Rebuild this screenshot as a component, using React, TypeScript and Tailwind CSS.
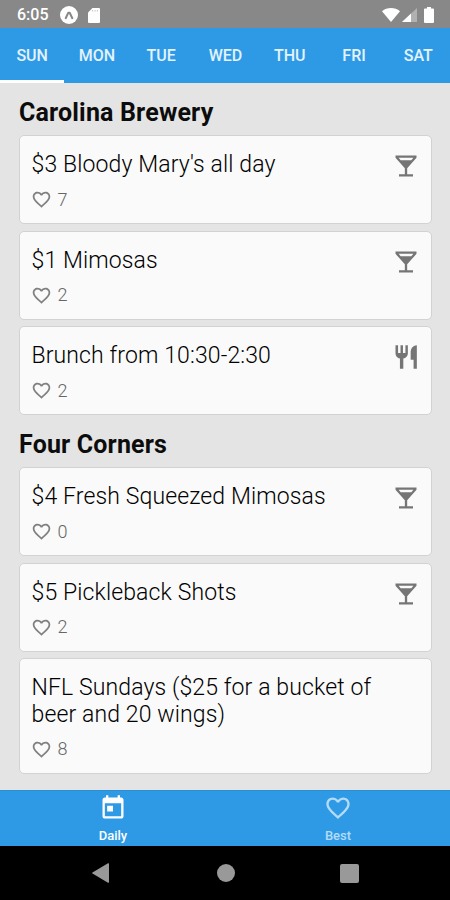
import type { ReactNode } from "react";

type Kind = "drink" | "food" | null;

const days = ["SUN", "MON", "TUE", "WED", "THU", "FRI", "SAT"];

const places: {
  name: string;
  specials: { text: string; likes: number; kind: Kind }[];
}[] = [
  {
    name: "Carolina Brewery",
    specials: [
      { text: "$3 Bloody Mary's all day", likes: 7, kind: "drink" },
      { text: "$1 Mimosas", likes: 2, kind: "drink" },
      { text: "Brunch from 10:30-2:30", likes: 2, kind: "food" },
    ],
  },
  {
    name: "Four Corners",
    specials: [
      { text: "$4 Fresh Squeezed Mimosas", likes: 0, kind: "drink" },
      { text: "$5 Pickleback Shots", likes: 2, kind: "drink" },
      {
        text: "NFL Sundays ($25 for a bucket of beer and 20 wings)",
        likes: 8,
        kind: null,
      },
    ],
  },
];

function Icon({ className, children }: { className: string; children: ReactNode }) {
  return (
    <svg viewBox="0 0 24 24" fill="currentColor" className={className}>
      {children}
    </svg>
  );
}

function Heart({ className }: { className: string }) {
  return (
    <Icon className={className}>
      <path d="M16.5 3c-1.74 0-3.41.81-4.5 2.09C10.91 3.81 9.24 3 7.5 3 4.42 3 2 5.42 2 8.5c0 3.78 3.4 6.86 8.55 11.54L12 21.35l1.45-1.32C18.6 15.36 22 12.28 22 8.5 22 5.42 19.58 3 16.5 3zm-4.4 15.55l-.1.1-.1-.1C7.14 14.24 4 11.39 4 8.5 4 6.5 5.5 5 7.5 5c1.54 0 3.04.99 3.57 2.36h1.87C13.46 5.99 14.96 5 16.5 5c2 0 3.5 1.5 3.5 3.5 0 2.89-3.14 5.74-7.9 10.05z" />
    </Icon>
  );
}

function KindIcon({ kind }: { kind: Kind }) {
  if (kind === "drink") {
    return (
      <Icon className="-mb-1 size-7 shrink-0 text-[#757575]">
        <path d="M21 5V3H3v2l8 9v5H6v2h12v-2h-5v-5l8-9zM7.43 7L5.66 5h12.69l-1.78 2H7.43z" />
      </Icon>
    );
  }
  if (kind === "food") {
    return (
      <Icon className="-mb-1 size-7 shrink-0 text-[#757575]">
        <path d="M11.5 2v6.600H9.400V2H7.300v6.600H5.200V2H3v7c0 2.200 1.600 3.900 3.800 4.300V22h2.900v-8.700c2.200-.4 3.900-2.100 3.900-4.300V2zM21.300 2c-3 0-5.300 2.600-5.300 5.800v6.600h2.500V22h2.800z" />
      </Icon>
    );
  }
  return null;
}

function StatusBar() {
  return (
    <header className="flex h-7 shrink-0 items-center bg-[#888888] pt-0.5 pl-[17px] pr-4 text-white">
      <span className="text-base leading-6 font-medium">6:05</span>
      <svg viewBox="0 0 18 18" className="ml-[11px] size-[18px]">
        <circle cx="9" cy="9" r="9" fill="#fff" />
        <path d="M5.700 12.200 8.300 6.800h1.400l2.600 5.400" fill="none" stroke="#888" strokeWidth="2" strokeLinejoin="round" strokeLinecap="round" />
      </svg>
      <svg viewBox="0 0 12 15" className="ml-2.5 h-[15px] w-3" fill="#fff">
        <path d="M4.500 0H11a1 1 0 0 1 1 1v13a1 1 0 0 1-1 1H1a1 1 0 0 1-1-1V4.500z" />
        <path d="M4.600 2v1.500M7 2v1.500M9.400 2v1.500" stroke="#bbb" strokeWidth=".9" />
      </svg>
      <svg viewBox="0 0 18 14" className="ml-auto h-3.5 w-[18px]" fill="#fff">
        <path d="M9 14 0 3.200C5-1 13-1 18 3.200z" />
      </svg>
      <svg viewBox="0 0 15 14" className="ml-0.5 h-3.5 w-[15px]" fill="#fff">
        <path d="M0 14 15 0v14z" opacity=".35" />
        <path d="M0 14 9 5.600V14z" />
      </svg>
      <svg viewBox="0 0 10 16" className="ml-[7px] h-4 w-2.5" fill="#fff">
        <path d="M3 0h4v1.600h2a1 1 0 0 1 1 1V15a1 1 0 0 1-1 1H1a1 1 0 0 1-1-1V2.600a1 1 0 0 1 1-1h2z" />
      </svg>
    </header>
  );
}

export default function App() {
  return (
    <div className="flex h-[900px] w-[450px] flex-col overflow-hidden bg-[#e4e4e4] font-[Roboto,sans-serif]">
      <StatusBar />

      <nav className="grid h-[54.5px] shrink-0 grid-cols-7 bg-[#2e9ae6] text-center text-base font-medium text-[#e4f2fc]">
        {days.map((day, i) => (
          <div
            key={day}
            className={
              i === 0
                ? "border-b-[3px] border-white pt-[3px] leading-[49px]"
                : "pt-[3px] pl-px leading-[49px]"
            }
          >
            {day}
          </div>
        ))}
      </nav>

      <main className="flex-1 pr-[18px] pl-[19px]">
        {places.map((place) => (
          <section key={place.name} className="h-[332px]">
            <h2 className="h-[52.5px] pt-[14.5px] text-[25px] leading-8 font-bold tracking-[0.17px] text-[#0c0c0c]">
              {place.name}
            </h2>
            <div className="flex flex-col gap-[6.5px]">
              {place.specials.map((special) => (
                <article
                  key={special.text}
                  className="rounded-[5px] border border-[#d2d2d2] bg-[#fafafa] px-[11.5px] pt-4 pb-[11.5px]"
                >
                  <div className="flex items-start justify-between">
                    <p className="w-[350px] text-[23px] leading-[26.5px] font-light tracking-[0.12px] text-black">
                      {special.text}
                    </p>
                    <KindIcon kind={special.kind} />
                  </div>
                  <div className="mt-[9px] -ml-px flex h-6 items-center gap-1.5 text-[#808080]">
                    <Heart className="size-[21px]" />
                    <span className="text-lg leading-6 font-light text-[#666666]">
                      {special.likes}
                    </span>
                  </div>
                </article>
              ))}
            </div>
          </section>
        ))}
      </main>

      <nav className="grid h-14 shrink-0 grid-cols-2 border-t border-[#2b8fd4] bg-[#2e9ae6] text-[13px] font-medium">
        <div className="flex flex-col items-center pt-[3px] pl-px text-white">
          <Icon className="size-7">
            <path d="M19 3h-1V1h-2v2H8V1H6v2H5c-1.110 0-1.990.9-1.990 2L3 19c0 1.100.890 2 2 2h14c1.100 0 2-.9 2-2V5c0-1.100-.9-2-2-2zm0 16H5V8h14v11zM7 10h5v5H7z" />
          </Icon>
          <span className="mt-1.5 leading-4">Daily</span>
        </div>
        <div className="flex flex-col items-center pt-[3px] pl-px text-[#b4dbf8]">
          <Heart className="size-7" />
          <span className="mt-1.5 leading-4">Best</span>
        </div>
      </nav>

      <footer className="flex h-[54px] shrink-0 items-center bg-black pl-[92px] text-[#999999]">
        <svg viewBox="0 0 17 20" className="h-5 w-[17px]" fill="currentColor">
          <path d="M16 .3q1-.4 1 .7v18q0 1.100-1 .7L.5 10.600q-.8-.6 0-1.200z" />
        </svg>
        <div className="ml-[108px] size-[18px] rounded-full bg-[#999999]" />
        <div className="ml-[105px] size-[19px] rounded-[2px] bg-[#999999]" />
      </footer>
    </div>
  );
}
